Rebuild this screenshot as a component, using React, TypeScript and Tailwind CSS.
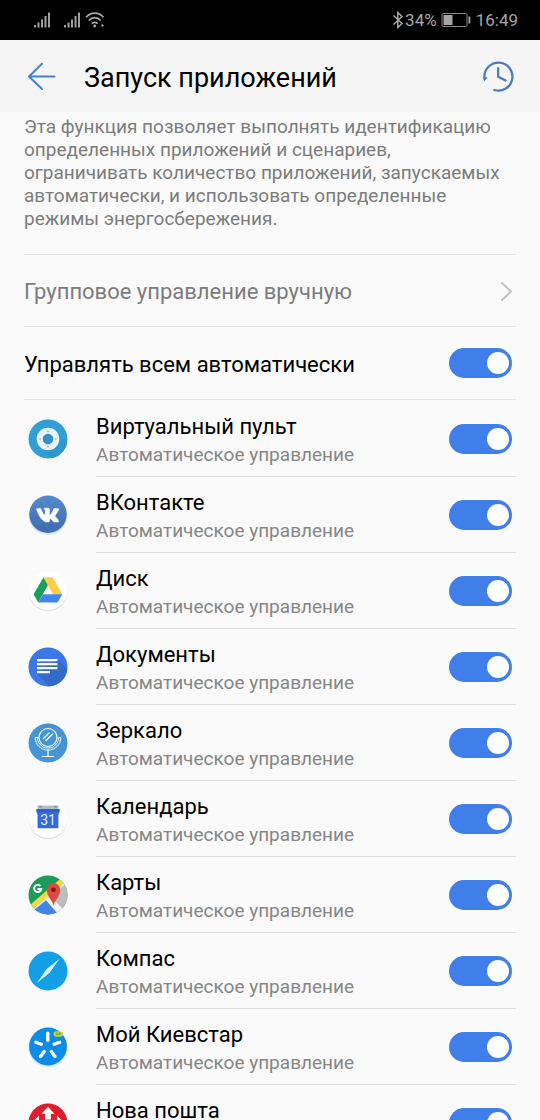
import type { ReactNode } from "react";

type AppEntry = { name: string; icon: ReactNode };

function RemoteIcon() {
  return (
    <svg viewBox="0 0 40 40" className="size-10" aria-hidden="true">
      <circle cx="20" cy="20" r="19.500" fill="#2f9fd6" />
      <path d="M27.500 12 39 24a19.500 19.500 0 0 1-15.500 15.200L12.500 27.800z" fill="#2b99cf" />
      <circle cx="20" cy="20" r="11.300" fill="#e9f5fa" />
      <circle cx="20" cy="20" r="5.300" fill="#2f93c4" />
      <g fill="#8ea9b5">
        <path d="M20 10.700l1.300 2h-2.600z" />
        <path d="M20 29.300l1.300-2h-2.600z" fill="#e0a08a" />
        <path d="M10.700 20l2-1.300v2.600z" fill="#e0a08a" />
        <path d="M29.300 20l-2-1.300v2.600z" fill="#e0a08a" />
      </g>
    </svg>
  );
}

function VkIcon() {
  return (
    <svg viewBox="0 0 40 40" className="size-10" aria-hidden="true">
      <defs>
        <linearGradient id="vk-fill" x1="0" y1="0" x2="0" y2="1">
          <stop offset="0" stopColor="#5489cf" />
          <stop offset="1" stopColor="#3f6cad" />
        </linearGradient>
      </defs>
      <circle cx="20" cy="20.600" r="19.400" fill="#d5e3f3" />
      <circle cx="20" cy="19.300" r="18.700" fill="url(#vk-fill)" />
      <path
        transform="translate(2.800 2.200) scale(1.400 1.530)"
        fill="#fff"
        stroke="#fff"
        strokeWidth="0.300"
        d="M12.785 16.241s.288-.032.436-.194c.136-.148.132-.427.132-.427s-.02-1.304.576-1.496c.588-.19 1.341 1.26 2.14 1.818.605.422 1.064.33 1.064.33l2.137-.03s1.117-.071.587-.964c-.043-.073-.308-.661-1.588-1.87-1.34-1.264-1.16-1.059.453-3.246.983-1.332 1.376-2.145 1.253-2.493-.117-.332-.84-.244-.84-.244l-2.406.015s-.178-.025-.31.056c-.13.079-.212.262-.212.262s-.382 1.03-.89 1.907c-1.07 1.85-1.499 1.948-1.674 1.832-.407-.267-.305-1.075-.305-1.648 0-1.793.267-2.54-.521-2.733-.262-.065-.454-.107-1.123-.114-.858-.009-1.585.003-1.996.208-.274.136-.485.44-.356.457.159.022.519.099.71.363.246.341.237 1.107.237 1.107s.142 2.11-.33 2.371c-.325.18-.77-.187-1.725-1.865-.489-.859-.859-1.81-.859-1.81s-.07-.176-.198-.272c-.154-.115-.37-.151-.37-.151l-2.286.015s-.343.01-.469.161C3.94 7.721 4.043 8 4.043 8s1.79 4.258 3.817 6.403c1.858 1.967 3.968 1.838 3.968 1.838h.957z"
      />
    </svg>
  );
}

function WhiteDisc() {
  return (
    <>
      <circle cx="20" cy="20.800" r="19.200" fill="#d2d2d2" />
      <circle cx="20" cy="20" r="19.400" fill="#ececec" opacity="0.700" />
      <circle cx="20" cy="19.600" r="19.200" fill="#fff" />
    </>
  );
}

function DriveIcon() {
  return (
    <svg viewBox="0 0 40 40" className="size-10" aria-hidden="true">
      <WhiteDisc />
      <path d="M15.500 6.200 20 14.100 10.300 31.500 5.600 23.300z" fill="#1c9f5b" />
      <path d="M15.500 6.200h9.300l9.500 17H25z" fill="#fdcf48" />
      <path d="M15 23.200h19.300l-4.800 8.300H10.300z" fill="#4385ee" />
    </svg>
  );
}

function DocsIcon() {
  return (
    <svg viewBox="0 0 40 40" className="size-10" aria-hidden="true">
      <defs>
        <clipPath id="docs-clip">
          <circle cx="20" cy="20" r="19.500" />
        </clipPath>
      </defs>
      <g clipPath="url(#docs-clip)">
        <rect width="40" height="40" fill="#3c78e3" />
        <path d="M29.500 12.500 42 25v17H24L9 26.500z" fill="#3369c9" />
        <path d="M9 12h20.500v2.200H9zM9 16h20.500v2.200H9zM9 20h20.500v2.200H9zM9 24h13v2.200H9z" fill="#fff" />
      </g>
    </svg>
  );
}

function MirrorIcon() {
  return (
    <svg viewBox="0 0 40 40" className="size-10" aria-hidden="true">
      <circle cx="20" cy="20" r="19.500" fill="#4396d3" />
      <g fill="none" stroke="#fff" strokeWidth="1.200" strokeLinecap="round" strokeLinejoin="round">
        <circle cx="20" cy="14.500" r="9" />
        <path d="M9.300 14.500H7.200c0 7 5.600 12.600 12.800 12.600s12.800-5.600 12.800-12.600h-2.100c0 5.900-4.800 10.600-10.700 10.600S9.300 20.400 9.300 14.500z" strokeWidth="0.900" />
        <path d="M20 27v6M14.300 33.500h11.400M15.500 15.500l5.500-5.500M18 17.500l6.500-6.500" />
      </g>
    </svg>
  );
}

function CalendarIcon() {
  return (
    <svg viewBox="0 0 40 40" className="size-10" aria-hidden="true">
      <WhiteDisc />
      <path d="M9.500 6.500h21v6h-21z" fill="#b4bfcd" />
      <path d="M11 7h3v1.500h-3zM26 7h3v1.500h-3z" fill="#7f90aa" />
      <path d="M8.600 10h22.800v3.500l-1 2v13.700H9.600V15.500l-1-2z" fill="#346bdc" />
      <path d="M8.600 10h22.800v3H8.600z" fill="#2f5fc8" />
      <text x="20" y="25.500" textAnchor="middle" fontFamily="Roboto, sans-serif" fontSize="14" fill="#e6eeff">
        31
      </text>
    </svg>
  );
}

function MapsIcon() {
  return (
    <svg viewBox="0 0 40 40" className="size-10" aria-hidden="true">
      <defs>
        <clipPath id="maps-clip">
          <circle cx="20" cy="20" r="19.500" />
        </clipPath>
      </defs>
      <g clipPath="url(#maps-clip)">
        <rect width="40" height="40" fill="#1c9c56" />
        <path d="M42 0v42H34L18 23z" fill="#bdbdbd" />
        <path d="M18 22 34 42H0V36z" fill="#4285e8" />
        <path d="M20.500 19.500 38 37l-5.500 5L16.500 23.500z" fill="#f4f4f4" />
        <path d="M31.500 4.500 36.500 7.500 4.500 34-1 32.500z" fill="#efdc3c" />
        <path d="M36.500 7.500 38 9 19 24.500 5 36 3.500 34.800z" fill="#e4e4d8" />
      </g>
      <path d="M25.500 31c-.500-5.500-6.700-9-6.700-16.300a6.700 6.700 0 0 1 13.400 0c0 7.300-6.200 10.800-6.700 16.300z" fill="#dd4b3e" />
      <circle cx="25.500" cy="14.800" r="2.400" fill="#7c2018" />
      <path d="M12.400 11a3.600 3.600 0 1 0 .900 3H9.500" fill="none" stroke="#fff" strokeWidth="1.900" />
    </svg>
  );
}

function CompassIcon() {
  return (
    <svg viewBox="0 0 40 40" className="size-10" aria-hidden="true">
      <circle cx="20" cy="20" r="19.500" fill="#139fe6" />
      <path d="M31.200 8 21.700 21.500 9.300 31.500 18.300 18.500z" fill="#e9fbff" />
      <path d="M31.200 8 21.700 21.500 9.300 31.500z" fill="#c5f0fc" />
    </svg>
  );
}

function KyivstarIcon() {
  return (
    <svg viewBox="0 0 40 40" className="size-10" aria-hidden="true">
      <circle cx="20" cy="20.400" r="19.500" fill="#cfe7fa" />
      <circle cx="20" cy="19.500" r="18.900" fill="#0d8be8" />
      <g stroke="#fff" strokeWidth="3.300" strokeLinecap="round">
        <path d="M19.800 6.200v7" />
        <path d="M7.800 15.200l5.700 2" />
        <path d="M31.800 15.200l-5.700 2" />
        <path d="M12.500 29.500l3.700-5" />
        <path d="M27 29.500l-3.700-5" />
      </g>
      <rect x="25.500" y="4.300" width="9.500" height="5.500" rx="2.700" fill="#b8d84a" />
      <path d="M28 8.300l.900-2.500.900 2.500M31 8.300V5.800h1.300V7H31" fill="none" stroke="#5c8c3a" strokeWidth="0.600" />
    </svg>
  );
}

function PostIcon() {
  return (
    <svg viewBox="0 0 40 40" className="size-10" aria-hidden="true">
      <circle cx="20" cy="20" r="19.500" fill="#dc1f2b" />
      <g fill="#fff">
        <path d="M20 3.800l6.500 6.900h-3.500v5.800h-6v-5.800h-3.500z" />
        <path d="M20 36.200l6.500-6.900h-3.500v-5.800h-6v5.800h-3.500z" />
        <path d="M3.500 20l7.500-7.500v15zM36.500 20 29 12.500v15z" />
      </g>
    </svg>
  );
}

const apps: AppEntry[] = [
  { name: "Виртуальный пульт", icon: <RemoteIcon /> },
  { name: "ВКонтакте", icon: <VkIcon /> },
  { name: "Диск", icon: <DriveIcon /> },
  { name: "Документы", icon: <DocsIcon /> },
  { name: "Зеркало", icon: <MirrorIcon /> },
  { name: "Календарь", icon: <CalendarIcon /> },
  { name: "Карты", icon: <MapsIcon /> },
  { name: "Компас", icon: <CompassIcon /> },
  { name: "Мой Киевстар", icon: <KyivstarIcon /> },
  { name: "Нова пошта", icon: <PostIcon /> },
];

function Toggle({ id }: { id: string }) {
  return (
    <input
      id={id}
      type="checkbox"
      role="switch"
      defaultChecked
      className="flex h-[30px] w-[63px] shrink-0 cursor-pointer appearance-none items-center rounded-full bg-gray-300 px-[3px] before:block before:size-[22px] before:rounded-full before:bg-white checked:justify-end checked:bg-[#407fe9]"
    />
  );
}

function SignalIcon() {
  return (
    <svg viewBox="0 0 18 16" className="h-4 w-[18px]" fill="#a0a0a0" aria-hidden="true">
      <path d="M1 13h2v2.500H1zM4.500 10.500h2v5h-2zM8 7.500h2v8H8zM11.500 4h2v11.500h-2zM15 .500h2v15h-2z" />
    </svg>
  );
}

function StatusBar() {
  return (
    <div className="flex h-10 shrink-0 items-center justify-between bg-black pr-[22px] pl-[33px] text-[#a6a6a6]">
      <div className="flex items-center">
        <SignalIcon />
        <span className="w-3" />
        <SignalIcon />
        <svg viewBox="0 0 20 16" className="ml-1 h-4 w-5" fill="none" stroke="#a6a6a6" strokeWidth="1.700" aria-hidden="true">
          <path d="M1 5.200C6-.300 13.500-.300 18.500 5.200M3.800 8.500c3.500-3.800 8.400-3.800 11.900 0M6.800 11.700c1.800-1.900 4.100-1.900 5.900 0" />
          <circle cx="9.700" cy="14" r="1.400" fill="#a6a6a6" stroke="none" />
          <path d="M16.500 11.500l2.500 2-2.500 2z" fill="#a6a6a6" stroke="none" />
        </svg>
      </div>
      <div className="flex items-center text-[17px] leading-5">
        <svg viewBox="0 0 12 18" className="mr-px h-[18px] w-3" fill="none" stroke="#a6a6a6" strokeWidth="1.500" aria-hidden="true">
          <path d="M1.500 4.500l8.500 8L5.800 16.500v-15L10 5.500l-8.500 8" />
        </svg>
        <span>34%</span>
        <svg viewBox="0 0 30 16" className="mr-[5px] ml-1 h-4 w-[30px]" aria-hidden="true">
          <rect x="1" y="1.500" width="25" height="13" rx="1.500" fill="none" stroke="#8a8a8a" strokeWidth="1" />
          <rect x="2.500" y="3" width="9" height="10" fill="#a6a6a6" />
          <rect x="27.500" y="4.500" width="1.800" height="7" fill="#a6a6a6" />
        </svg>
        <span>16:49</span>
      </div>
    </div>
  );
}

function Header() {
  return (
    <header className="flex h-[72px] shrink-0 items-center bg-[#f5f5f5] pr-[26px] pl-7">
      <button type="button" aria-label="Назад" className="cursor-pointer">
        <svg viewBox="0 0 28 28" className="size-7" fill="none" stroke="#4a80c8" strokeWidth="2" strokeLinecap="round" strokeLinejoin="round" aria-hidden="true">
          <path d="M26.500 14.500H1M14 1.700 1 14.500l13 12.500" />
        </svg>
      </button>
      <h1 className="ml-7 flex-1 pt-[3px] text-[27px] leading-9 text-black">Запуск приложений</h1>
      <button type="button" aria-label="История" className="cursor-pointer">
        <svg viewBox="0 0 32 32" className="size-8" fill="none" stroke="#4a7cc0" strokeWidth="2.200" strokeLinecap="round" aria-hidden="true">
          <path d="M2.500 18A14 14 0 1 1 12.300 30" />
          <path d="M16.200 8v8.800l7.500 3.800" />
          <path d="M.800 17l5 .600-3.600 3.700z" fill="#4a7cc0" stroke="none" />
        </svg>
      </button>
    </header>
  );
}

export default function App() {
  return (
    <div className="flex h-screen flex-col overflow-hidden bg-[#fafafa] font-[Roboto,'Noto_Sans',sans-serif]">
      <StatusBar />
      <Header />
      <main className="min-h-0 flex-1 overflow-y-auto [scrollbar-width:none]">
        <div className="mx-6">
          <p className="pt-[3px] pb-6 text-[19px] leading-[23px] text-[#7c7c7c]">
            Эта функция позволяет выполнять идентификацию определенных приложений и сценариев, ограничивать
            количество приложений, запускаемых автоматически, и использовать определенные режимы
            энергосбережения.
          </p>
          <button
            type="button"
            className="flex h-[73px] w-full cursor-pointer items-center justify-between border-y border-[#e4e4e4] pt-[2px] pr-1 text-left text-[22px] text-[#7c7c7c]"
          >
            <span>Групповое управление вручную</span>
            <svg viewBox="0 0 12 20" className="h-5 w-3" fill="none" stroke="#bdbdbd" strokeWidth="1.800" aria-hidden="true">
              <path d="M1.500 .500l9.500 9-9.500 9" />
            </svg>
          </button>
          <div className="flex h-[73px] items-center justify-between border-b border-[#e4e4e4] pr-1">
            <label htmlFor="toggle-all" className="pt-[2px] text-[22px] text-black">
              Управлять всем автоматически
            </label>
            <Toggle id="toggle-all" />
          </div>
        </div>
        <ul className="pt-px">
          {apps.map((app, index) => (
            <li key={app.name} className="flex h-[76px] gap-7 pr-6 pl-7">
              <span className="flex items-center">{app.icon}</span>
              <div className="flex flex-1 items-center justify-between border-b border-[#e0e0e0] pr-1">
                <label htmlFor={`toggle-${index}`} className="flex flex-col pt-1">
                  <span className="text-[22px] leading-7 text-black">{app.name}</span>
                  <span className="text-[19px] leading-7 text-[#868686]">Автоматическое управление</span>
                </label>
                <Toggle id={`toggle-${index}`} />
              </div>
            </li>
          ))}
        </ul>
      </main>
    </div>
  );
}
